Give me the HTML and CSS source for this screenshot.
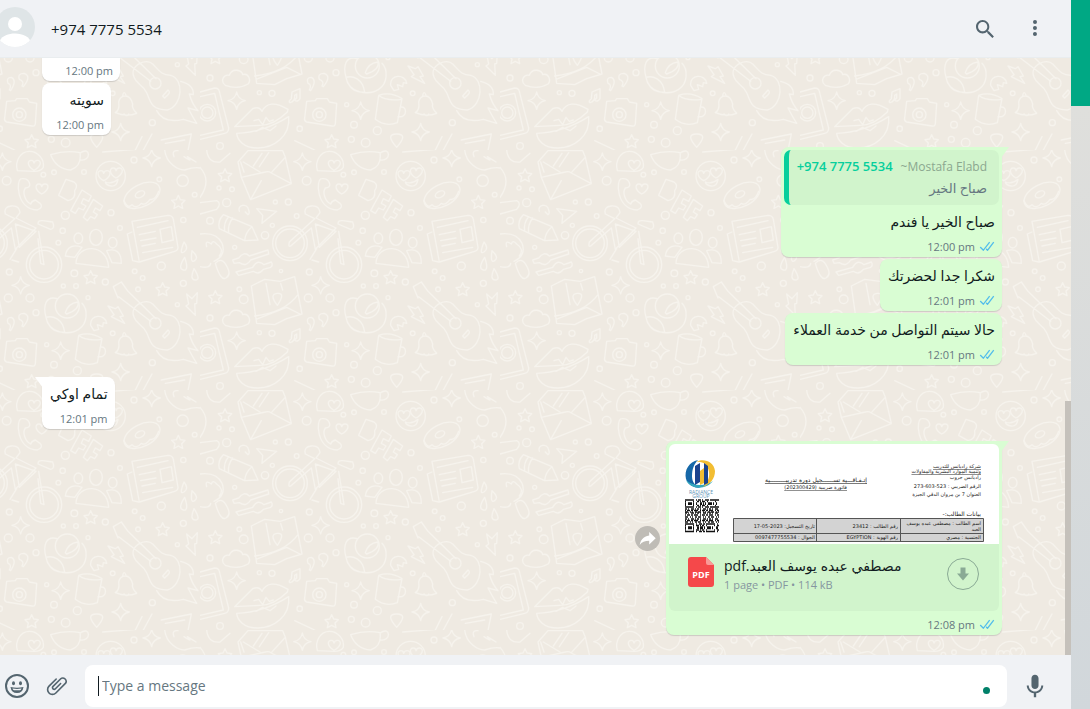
FILE: index.html
```html
<!DOCTYPE html>
<html lang="en">
<head>
    <meta charset="UTF-8">
    <meta name="viewport" content="width=device-width, initial-scale=1.0">
    <title>Chat</title>
    <link rel="stylesheet" href="styles.css">
</head>
<body>
    <svg class="defs" width="0" height="0" aria-hidden="true">
        <symbol id="ticks" viewBox="0 0 16 15">
            <path fill="currentColor" d="M15.01 3.316l-.478-.372a.365.365 0 0 0-.51.063L8.666 9.879a.32.32 0 0 1-.484.033l-.358-.325a.319.319 0 0 0-.484.032l-.378.483a.418.418 0 0 0 .036.541l1.32 1.266c.143.14.361.125.484-.033l6.272-8.048a.366.366 0 0 0-.064-.512zm-4.1 0l-.478-.372a.365.365 0 0 0-.51.063L4.566 9.879a.32.32 0 0 1-.484.033L1.891 7.769a.366.366 0 0 0-.515.006l-.423.433a.364.364 0 0 0 .006.514l3.258 3.185c.143.14.361.125.484-.033l6.272-8.048a.365.365 0 0 0-.063-.51z"/>
        </symbol>
    </svg>

    <div class="app">
        <main class="chat">
            <header class="chat-header">
                <svg class="avatar" viewBox="0 0 40 40">
                    <clipPath id="round"><circle cx="20" cy="20" r="20"/></clipPath>
                    <g clip-path="url(#round)">
                        <rect width="40" height="40" fill="#dfe5e7"/>
                        <circle cx="20" cy="17" r="7" fill="#fff"/>
                        <path fill="#fff" d="M4 40v-4c1-6 8-9.500 16-9.500s15 3.500 16 9.500v4z"/>
                    </g>
                </svg>
                <h1 class="contact">+974 7775 5534</h1>
                <button class="icon-btn" aria-label="Search">
                    <svg viewBox="0 0 24 24"><path fill="currentColor" d="M15.9 14.3H15l-.3-.3c1-1.100 1.600-2.700 1.600-4.300 0-3.700-3-6.700-6.700-6.700S3 6 3 9.700s3 6.700 6.700 6.700c1.600 0 3.200-.6 4.300-1.600l.3.3v.8l5.100 5.100 1.500-1.500-5-5.200zm-6.200 0c-2.600 0-4.600-2.100-4.600-4.600s2.100-4.600 4.600-4.600 4.600 2.100 4.600 4.600-2 4.600-4.600 4.600z"/></svg>
                </button>
                <button class="icon-btn" aria-label="Menu">
                    <svg viewBox="0 0 24 24"><path fill="currentColor" d="M12 7a2 2 0 1 0-.001-4.001A2 2 0 0 0 12 7zm0 2a2 2 0 1 0-.001 3.999A2 2 0 0 0 12 9zm0 6a2 2 0 1 0-.001 3.999A2 2 0 0 0 12 15z"/></svg>
                </button>
            </header>

            <section class="conversation">
                <!-- Doodle wallpaper -->
                <svg class="wallpaper" width="100%" height="100%" aria-hidden="true">
                    <defs>
                        <g id="star"><path d="M0-20l6 13 14 2-10 10 3 14-13-7-13 7 3-14-10-10 14-2z"/></g>
                        <g id="spark"><path d="M0-26q4 22 26 26q-22 4-26 26q-4-22-26-26q22-4 26-26z"/></g>
                        <g id="heart"><path d="M0 16c-22-13-20-30-8-30q7 0 8 8q3-9 11-8c14 2 9 20-11 30z"/></g>
                        <pattern id="doodles" width="300" height="240" x="200" y="92" patternUnits="userSpaceOnUse" viewBox="0 0 900 720">
                            <g fill="none" stroke="#f6f3ed" stroke-width="4" stroke-linejoin="round" stroke-linecap="round">
                                <!-- letter -->
                                <path d="M124 82l72-16q10-3 18 3l60 32-122 48zM124 82l-10-46 30-34h104l8 20 18 78M132 66l-10-30M152 148l32-56M180 66l-50-30M214 68l40-44M160 48l26-38M178 50l28-42"/>
                                <!-- phone and heart -->
                                <path d="M366 86c-20 0-18 92 46 94q20-8 8-20l-14-10q-12 4-14 12c-16-8-26-34-16-48q18-2 12-16t-22-12z"/>
                                <use href="#heart" x="425" y="116"/>
                                <path d="M352 62c-8-30 10-58 36-58s46 24 42 48q-10 14-30 12z"/>
                                <use href="#heart" x="402" y="45"/>
                                <path d="M452 14q46-14 88-6q6 40-28 52q-44-4-60-46zM542 8c30-20 32 26 0 22"/>
                                <!-- smiley -->
                                <circle cx="632" cy="78" r="44"/>
                                <path d="M616 96q20 8 38-8q-4 22-20 20t-18-12z"/>
                                <use href="#heart" x="611" y="76"/><use href="#heart" x="648" y="68"/>
                                <!-- block letters -->
                                <path d="M498 88l24 8q14 10 2 26q4 26-20 30l-28-16zM546 120l28 18-8 16-16-8-6 14 14 8-8 12-14-6-10 16-14-8zM580 148l28 20-8 14-14-8-6 12 12 8-8 12-12-6-10 12-12-10z"/>
                                <!-- doughnut -->
                                <ellipse cx="726" cy="136" rx="58" ry="33" transform="rotate(-27 726 136)"/>
                                <ellipse cx="720" cy="133" rx="15" ry="9" transform="rotate(-27 720 133)"/>
                                <path d="M672 152q12 26 24 12q14 14 28-4q12 8 26-12q16 4 26-24"/>
                                <!-- crayon -->
                                <path d="M70 194q-18 18-12 42l76 36 40-2-18-40zM86 200q-16 20-12 42M98 204q-16 22-12 44M134 272q2-26 22-42"/>
                                <path d="M170 176l60 8-44 36 2-24zM118 184c-8-20 24-26 28-4q4 10-2 14l-8-8"/>
                                <!-- bike -->
                                <circle cx="270" cy="280" r="52"/><circle cx="270" cy="280" r="43"/>
                                <circle cx="432" cy="344" r="53"/><circle cx="432" cy="344" r="43"/>
                                <path d="M268 276l76-70-28-14q-6-22 18-24t26 20l-12 16 60 30-62 64-12-64-62 54q-8 4-4-12M346 222l12 70 50-48zM416 244l16 100-10-4-8-74M414 222q0-12 14-10l30 4q8 20-6 22zM330 328l20-32M336 330l20 6"/>
                                <!-- people -->
                                <path d="M528 340c2-60 94-62 98 12zM496 318c4-30 28-36 50-26l-22 30zM664 340c0-34-16-46-44-38l16 36z"/>
                                <ellipse cx="588" cy="262" rx="19" ry="24"/><ellipse cx="535" cy="265" rx="13" ry="16"/><ellipse cx="638" cy="278" rx="13" ry="16"/>
                                <!-- newspaper -->
                                <path d="M696 214l108-18q14 0 16 12l14 84q0 10-10 12l-106 32zM696 246l-14 6 16 80 18 4M712 232l92-20M718 254l48-10M722 272l46-8M726 288l40-8M728 308l90-16M780 238l34-8 6 40-34 8z"/>
                                <!-- sliders -->
                                <path d="M98 330l18-6q16-22 32-6l56-18 2 12-54 18q-12 22-34 8l-16 2zM108 366l50-14q14-26 34-8l22-8q6 10-2 16l-22 6q-14 18-30 6l-44 12z"/>
                                <path d="M0 252q50-6 66 28q14 36-24 54M20 290q-6-22 14-8q4-14 16 0q24 16 8 36M46 340q20-22 36 12q12 22-4 32t-32-44zM0 350q30 6 32-10"/>
                                <!-- map -->
                                <path d="M154 408l40-20 46 6 44-14 22 112-46 14-36 18-54-4zM164 498q90-10 130-64M168 508l92-36 40 20M198 400l12 64M242 400l6 20"/>
                                <path d="M232 466q-26-34 0-36t0 36z"/>
                                <!-- bird -->
                                <circle cx="502" cy="468" r="36"/>
                                <path d="M472 446c-34-10-44 20-34 56 8 50 70 54 98 36s28-60 10-78M438 502c20-6 50 4 56 44q-44 4-56-44zM496 488q8-28 38-32q6 22-34 36z"/>
                                <!-- guitar -->
                                <path d="M640 410l24-14 20 28 84 82M656 440l96 74M640 410l14 34M702 502c-16-34 36-60 56-40s24 32 54 34c40 10 38 90-10 104-50 0-50-26-62-52s-30-24-38-46zM788 558l16-18q8 6 0 14l-10 10zM842 514q40 10 38 40l-12-2q8 30 26 50l-30-8q10 20 26 46l-40-12q-60 14-80-26"/>
                                <circle cx="766" cy="520" r="17"/>
                                <!-- cloud, tablet, lips -->
                                <path d="M76 526c-16-12-6-34 12-30 8-24 38-16 40-2 18-6 26 18 16 28q-30 18-68 4zM0 546l44-12q12 0 14 10l28 110q0 14-12 16l-74 18M0 560l44-10 26 110-70 16"/>
                                <circle cx="22" cy="608" r="25"/><circle cx="22" cy="608" r="17"/>
                                <path d="M104 650l54-54q20-8 28 8q20-40 78-6l-2 8q-40 40-82 40zM110 670q80-2 156-50c6 60-46 94-92 94s-62-26-64-44zM162 632l14-4 12 16 10-22 10 12 12-4M168 664l20-12 22 10 18-14"/>
                                <!-- camera, mug, bell -->
                                <path d="M320 574l26-2 4-6h32l6 10 22 4-4 62q-2 8-10 6l-76-12q-8-2-6-12z"/><circle cx="358" cy="614" r="20"/><circle cx="358" cy="614" r="9"/>
                                <path d="M536 556l-10 72q32 24 66 10l14-72q-34-22-70-10zM536 556q20 18 70 12M600 592c20-8 26 32-6 28M646 608q14-8 10-32 4-18 20-18t22 24q-4 12 12 28-30 12-64-2zM668 556q4-16 10 0M672 612q10 10 14 0"/>
                                <!-- bolts, notes, bits -->
                                <path d="M624 468l22 8 8-6 16 28-10 2 14 20-40-20 8-6zM860 432l16 14 16-18-2 32-6 2 2 34-28-28 8-6zM324 520q-6-18 10-18 18 8-2 40l-4-2q8-16-4-20zM358 508q-6-18 14-18 24 8-2 40l-4-2q8-14-8-20zM276 546l24-10v30q-8 12-16 4l6-6v-12l-6 4q2 18-14 22-6-4 4-12zM572 526c-4-34 44-36 48-6l-10-2-2 12-16-6 4 14-14 4zM590 712q-36-40 0-40t0 40zM706 720l20-40M730 720l26-48M784 690l90-18-10 50M796 700l58-10M284 692l60 28M0 158l50-6q16 8 0 26l-50 14M0 52q36 40 0 90M20 0q4 40 40 36l30-26M608 6l100-8"/>
                                <path d="M794 0c4 40 40 60 60 60q30-10 46-6M822 20q-8-20 12-18M852 20q30 20 10 0l26 16M852 276q16 20 0 30t0-30zM876 302q22 20 8 30t-8-30zM854 322q-22 34-4 38t4-38zM882 356q-14 34 4 34t-4-34z"/>
                                <circle cx="848" cy="92" r="17"/>
                                <use href="#star" x="75" y="76"/><use href="#star" x="46" y="442"/><use href="#star" x="572" y="382"/><use href="#star" x="835" y="156"/><use href="#star" x="395" y="694"/><use href="#star" x="788" y="418"/>
                                <use href="#spark" x="307" y="35"/><use href="#spark" x="755" y="24"/><use href="#spark" x="362" y="406"/><use href="#spark" x="110" y="572"/><use href="#spark" x="482" y="602"/><use href="#spark" x="662" y="666"/>
                                <circle cx="320" cy="92" r="13"/><circle cx="265" cy="156" r="9"/><circle cx="80" cy="158" r="12"/><circle cx="30" cy="212" r="10"/><circle cx="195" cy="256" r="11"/><circle cx="496" cy="196" r="12"/><circle cx="633" cy="188" r="9"/><circle cx="488" cy="242" r="8"/><circle cx="475" cy="278" r="7"/><circle cx="523" cy="370" r="10"/><circle cx="328" cy="366" r="9"/><circle cx="390" cy="444" r="12"/><circle cx="325" cy="444" r="12"/><circle cx="408" cy="488" r="9"/><circle cx="131" cy="448" r="13"/><circle cx="30" cy="504" r="9"/><circle cx="216" cy="550" r="9"/><circle cx="784" cy="348" r="12"/><circle cx="850" cy="400" r="9"/><circle cx="616" cy="396" r="9"/><circle cx="702" cy="30" r="9"/><circle cx="462" cy="644" r="10"/><circle cx="532" cy="662" r="12"/><circle cx="497" cy="698" r="13"/><circle cx="454" cy="688" r="9"/><circle cx="757" cy="638" r="9"/><circle cx="60" cy="708" r="10"/><circle cx="299" cy="656" r="8"/>
                                <circle cx="96" cy="118" r="7"/><circle cx="57" cy="114" r="6"/><circle cx="430" cy="74" r="7"/><circle cx="462" cy="67" r="7"/><circle cx="552" cy="66" r="7"/><circle cx="226" cy="156" r="6"/><circle cx="290" cy="198" r="7"/><circle cx="217" cy="226" r="6"/><circle cx="104" cy="292" r="6"/><circle cx="243" cy="363" r="5"/><circle cx="704" cy="364" r="7"/><circle cx="728" cy="384" r="7"/><circle cx="564" cy="443" r="6"/><circle cx="832" cy="464" r="6"/><circle cx="178" cy="548" r="6"/><circle cx="440" cy="584" r="6"/><circle cx="638" cy="550" r="7"/><circle cx="118" cy="418" r="7"/><circle cx="850" cy="210" r="8"/><circle cx="660" cy="234" r="7"/><circle cx="778" cy="88" r="7"/><circle cx="884" cy="134" r="7"/><circle cx="490" cy="408" r="6"/><circle cx="528" cy="408" r="7"/><circle cx="714" cy="418" r="7"/>
                            </g>
                        </pattern>
                    </defs>
                    <rect width="100%" height="100%" fill="url(#doodles)"/>
                </svg>

                <div class="messages">
                    <div class="bubble in cut">
                        <div class="meta">12:00 pm</div>
                    </div>
                    <div class="bubble in">
                        <p class="text" dir="rtl" lang="ar">سويته</p>
                        <div class="meta">12:00 pm</div>
                    </div>

                    <div class="bubble out first">
                        <div class="quote">
                            <div class="quote-head">
                                <span class="quote-number">+974 7775 5534</span>
                                <span class="quote-name">~Mostafa Elabd</span>
                            </div>
                            <p class="quote-text" dir="rtl" lang="ar">صباح الخير</p>
                        </div>
                        <p class="text" dir="rtl" lang="ar">صباح الخير يا فندم</p>
                        <div class="meta">12:00 pm <svg class="ticks"><use href="#ticks"/></svg></div>
                    </div>
                    <div class="bubble out">
                        <p class="text" dir="rtl" lang="ar">شكرا جدا لحضرتك</p>
                        <div class="meta">12:01 pm <svg class="ticks"><use href="#ticks"/></svg></div>
                    </div>
                    <div class="bubble out">
                        <p class="text" dir="rtl" lang="ar">حالا سيتم التواصل من خدمة العملاء</p>
                        <div class="meta">12:01 pm <svg class="ticks"><use href="#ticks"/></svg></div>
                    </div>

                    <div class="bubble in first">
                        <p class="text" dir="rtl" lang="ar">تمام اوكي</p>
                        <div class="meta">12:01 pm</div>
                    </div>

                    <div class="file-row">
                        <button class="forward" aria-label="Forward">
                            <svg viewBox="0 0 25 25"><path fill="#fff" d="M14.200 9.500V6l6.500 6.200-6.500 6.200v-3.600c-4.300 0-7.400 1.300-9.500 4.300.8-4.400 3.300-8.700 9.500-9.600z"/></svg>
                        </button>
                        <div class="bubble out first file">
                            <svg class="preview" viewBox="0 0 330 100">
                                <rect width="330" height="100" fill="#fff"/>
                                <!-- company logo -->
                                <path fill="#1668a8" d="M29 16c-9 2-14 10-12 19 2 6 8 9 15 9-6-2-9-6-9-12 0-7 2-12 6-16z"/>
                                <path fill="#34a7bd" d="M17 36c4 9 19 11 27 1-7 5-20 6-27-1z"/>
                                <path fill="#f2bd32" d="M27 18c7-4 18-1 19 9 0 8-5 13-12 16 4-4 7-9 6-15-1-7-6-11-13-10z"/>
                                <path fill="#1b438e" d="M26 22l5-3v19l-5 3zM35 19l4 3v17l-4 2z"/>
                                <path fill="#f2bd32" d="M31 27l4-3v15l-4 2z"/>
                                <g class="doc-brand" text-anchor="middle">
                                    <text x="32" y="50">RADIANCE</text>
                                    <text x="32" y="54">GROUP</text>
                                </g>
                                <!-- QR code -->
                                <g stroke="#111" stroke-width="1.300">
                                    <path stroke-dasharray="9 2 1 1 3 1 1 2 4 1" d="M16 56h34M16 63h34"/>
                                    <path stroke-dasharray="1 7 1 3 2 1 1 1 3 2" d="M16 57.500h34M16 61.500h34"/>
                                    <path stroke-dasharray="1 2 4 1 1 2 1 3 2 1 1 1" d="M16 59h34M16 60.300h34"/>
                                    <path stroke-dasharray="2 1 1 2 3 1 1 1" d="M16 65h34M16 69h34M16 75h34"/>
                                    <path stroke-dasharray="1 1 3 1 2 1 4 2" d="M16 66.500h34M16 71h34M16 76.500h34"/>
                                    <path stroke-dasharray="3 2 1 1 1 2 2 1" d="M16 68h34M16 73h34M16 78h34"/>
                                    <path stroke-dasharray="9 2 1 2 3 1 2 1" d="M16 80h34M16 87.500h34"/>
                                    <path stroke-dasharray="1 7 1 2 3 1 1 1 2 2" d="M16 81.500h34M16 86h34"/>
                                    <path stroke-dasharray="1 2 4 1 1 3 2 1 3 1" d="M16 83h34M16 84.500h34"/>
                                </g>
                                <!-- shaded table -->
                                <path fill="#d3d3d3" stroke="#555" stroke-width="1" d="M64.500 74.500h250v23h-250zM64.500 89.500h250M147.500 74.500v23M231.500 74.500v23"/>
                                <g class="doc-text" direction="rtl" lang="ar">
                                    <text class="line" x="312" y="24">شركة راديانس للتدريب</text>
                                    <text class="line" x="312" y="29">وتنمية الموارد البشرية والمقاولات</text>
                                    <text x="312" y="35">راديانس جروب</text>
                                    <text x="312" y="44">الرقم الضريبي : 523-603-273</text>
                                    <text x="312" y="52">العنوان 7 بن مروان الدقي الجيزة</text>
                                    <text class="doc-heading" x="312" y="72">بيانات الطالب:-</text>
                                    <text class="line doc-heading" x="198" y="38">إتـفـاقـــية تســــــجيل دورة تدريبـــــــــية</text>
                                    <text class="line" x="178" y="45">فاتورة ضريبية (202300429)</text>
                                    <text x="312" y="81">اسم الطالب : مصطفى عبده يوسف</text>
                                    <text x="312" y="87">العبد</text>
                                    <text x="229" y="84">رقم الطالب : 23412</text>
                                    <text x="146" y="84">تاريخ التسجيل: 2023-05-17</text>
                                    <text x="312" y="95">الجنسية : مصري</text>
                                    <text x="229" y="95">رقم الهوية : EGYPTION</text>
                                    <text x="146" y="95">الجوال : 0097477755534</text>
                                </g>
                            </svg>
                            <div class="file-info">
                                <svg class="pdf-icon" viewBox="0 0 26 30">
                                    <path fill="#f5484a" d="M3 0h15l8 8v19a3 3 0 0 1-3 3H3a3 3 0 0 1-3-3V3a3 3 0 0 1 3-3z"/>
                                    <path fill="#f99a98" d="M18 0l8 8h-6a2 2 0 0 1-2-2z"/>
                                    <text x="13" y="21" text-anchor="middle">PDF</text>
                                </svg>
                                <div class="file-label">
                                    <div class="file-name"><bdi>pdf.</bdi><bdi lang="ar">مصطفي عبده يوسف العبد</bdi></div>
                                    <div class="file-size">1 page • PDF • 114 kB</div>
                                </div>
                                <button class="download" aria-label="Download">
                                    <svg viewBox="0 0 34 34"><circle cx="17" cy="17" r="15.500" fill="none" stroke="currentColor"/><path fill="currentColor" d="M14.500 10.500h5v6h3.500l-6 7-6-7h3.500z"/></svg>
                                </button>
                            </div>
                            <div class="meta">12:08 pm <svg class="ticks"><use href="#ticks"/></svg></div>
                        </div>
                    </div>
                </div>
                <div class="scroll-thumb"></div>
            </section>

            <footer class="composer">
                <button class="icon-btn" aria-label="Emoji">
                    <svg viewBox="0 0 24 24"><circle cx="12" cy="12" r="11" fill="none" stroke="currentColor" stroke-width="2"/><ellipse cx="8.500" cy="9.300" rx="1.500" ry="2" fill="currentColor"/><ellipse cx="15.500" cy="9.300" rx="1.500" ry="2" fill="currentColor"/><path fill="currentColor" d="M5.500 13q6.500 1.600 13 0-.8 6-6.500 6t-6.500-6z"/><path fill="#f0f2f5" d="M7.500 14.600q4.500.9 9 0-.6 1.500-1.500 1.700H9q-1-.3-1.500-1.700z"/></svg>
                </button>
                <button class="icon-btn" aria-label="Attach">
                    <svg viewBox="0 0 24 24"><path fill="currentColor" d="M1.816 15.556v.002c0 1.502.584 2.912 1.646 3.972s2.472 1.647 3.974 1.647a5.580 5.580 0 0 0 3.972-1.645l9.547-9.548c.769-.768 1.147-1.767 1.058-2.817-.079-.968-.548-1.927-1.319-2.698-1.594-1.592-4.068-1.711-5.517-.262l-7.916 7.915c-.881.881-.792 2.250.214 3.261.959.958 2.423 1.053 3.263.215l5.511-5.512c.28-.28.267-.722.053-.936l-.244-.244c-.191-.191-.567-.349-.957.04l-5.506 5.506c-.18.18-.635.127-.976-.214-.098-.097-.576-.613-.213-.973l7.915-7.917c.818-.817 2.267-.699 3.230.262.5.501.802 1.100.849 1.685.051.573-.156 1.111-.589 1.543l-9.547 9.549a3.970 3.970 0 0 1-2.829 1.171 3.975 3.975 0 0 1-2.830-1.173 3.973 3.973 0 0 1-1.172-2.828c0-1.071.415-2.076 1.172-2.830l7.209-7.211c.157-.157.264-.579.028-.814L11.500 4.360a.572.572 0 0 0-.834.018l-7.205 7.207a5.577 5.577 0 0 0-1.645 3.971z"/></svg>
                </button>
                <div class="field">
                    <input type="text" placeholder="Type a message" aria-label="Type a message">
                    <span class="dot"></span>
                </div>
                <button class="icon-btn" aria-label="Voice message">
                    <svg viewBox="0 0 24 24"><path fill="currentColor" d="M11.999 14.942c2.001 0 3.531-1.530 3.531-3.531V4.350c0-2.001-1.530-3.531-3.531-3.531S8.469 2.350 8.469 4.350v7.061c0 2.001 1.530 3.531 3.530 3.531zm6.238-3.530c0 3.531-2.942 6.002-6.237 6.002s-6.237-2.471-6.237-6.002H3.761c0 4.001 3.178 7.297 7.061 7.885v3.884h2.354v-3.884c3.884-.588 7.061-3.884 7.061-7.885h-2z"/></svg>
                </button>
            </footer>
        </main>
        <div class="backdrop"></div>
    </div>
</body>
</html>
```
FILE: styles.css
```css
* {
    box-sizing: border-box;
}

body {
    margin: 0;
    font-family: "Open Sans", "DejaVu Sans", sans-serif;
    color: #111b21;
}

p, h1 {
    margin: 0;
}

button {
    border: none;
    padding: 0;
    background: none;
    cursor: pointer;
}

svg {
    display: block;
}

.defs {
    position: absolute;
}

.app {
    display: flex;
    height: 100vh;
    overflow: hidden;
}

.chat {
    flex: 1;
    min-width: 0;
    display: flex;
    flex-direction: column;
    overflow: hidden;
}

.backdrop {
    width: 19px;
    background: linear-gradient(#00a884 106px, #dfdfdc 106px, #d1d7db);
}

/* Header */
.chat-header {
    display: flex;
    align-items: center;
    height: 58px;
    padding: 0 24px 0 0;
    background-color: #f0f2f5;
    border-bottom: 1px solid #e9edef;
}

.avatar {
    width: 40px;
    height: 40px;
    margin: 0 16px 4px -5px;
}

.contact {
    flex: 1;
    font-size: 15px;
    font-weight: 400;
    line-height: 22px;
}

.icon-btn {
    width: 24px;
    height: 24px;
    color: #54656f;
}

.chat-header .icon-btn + .icon-btn {
    margin-left: 26px;
}

/* Messages */
.conversation {
    flex: 1;
    min-height: 0;
    position: relative;
    overflow: hidden;
    background-color: #efeae2;
}

.wallpaper {
    position: absolute;
    inset: 0;
}

.messages {
    position: relative;
    height: 100%;
    display: flex;
    flex-direction: column;
    justify-content: flex-end;
    align-items: flex-start;
    gap: 2px;
    padding: 0 69px 20px 42px;
}

.bubble {
    position: relative;
    min-width: 69px;
    padding: 6px 7px 3px 8px;
    border-radius: 8px;
    background-color: #fff;
    box-shadow: 0 1px 1px rgba(11, 20, 26, 0.15);
}

.bubble.out {
    align-self: flex-end;
    background-color: #d9fdd3;
}

.bubble.first,
.file-row {
    margin-top: 10px;
}

.bubble.in.first {
    border-top-left-radius: 0;
}

.bubble.out.first {
    border-top-right-radius: 0;
    padding: 3px;
}

.bubble.first::before {
    content: "";
    position: absolute;
    top: 0;
    left: -7px;
    width: 8px;
    height: 11px;
    background-color: inherit;
    clip-path: polygon(0 0, 100% 0, 100% 100%);
}

.bubble.out.first::before {
    left: auto;
    right: -7px;
    clip-path: polygon(0 0, 100% 0, 0 100%);
}

.bubble.cut {
    min-width: 78px;
}

.text {
    font-size: 14px;
    line-height: 22px;
}

.out.first .text {
    padding: 6px 4px 0;
}

.meta {
    display: flex;
    justify-content: flex-end;
    align-items: center;
    gap: 4px;
    margin-top: 6px;
    font-size: 11px;
    line-height: 15px;
    color: #667781;
}

.out.first .meta {
    padding-right: 4px;
}

.ticks {
    width: 16px;
    height: 15px;
    color: #53bdeb;
}

.quote {
    padding: 5px 12px 6px 8px;
    border-left: 5px solid #06cf9c;
    border-radius: 7px;
    background-color: #d1f4cc;
}

.quote-head {
    display: flex;
    align-items: baseline;
    gap: 8px;
    font-size: 12px;
    line-height: 22px;
}

.quote-number {
    font-size: 13px;
    font-weight: 600;
    color: #06cf9c;
}

.quote-name {
    color: #8ba78f;
}

.quote-text {
    font-size: 13px;
    line-height: 21px;
    color: #667781;
}

/* File message */
.file-row {
    align-self: flex-end;
    display: flex;
    align-items: center;
    gap: 6px;
}

.forward {
    width: 25px;
    height: 25px;
    border-radius: 50%;
    background-color: #bfbcb6;
}

.bubble.file {
    width: 336px;
    margin-top: 0;
}

.preview {
    width: 100%;
    border-radius: 6px 6px 0 0;
}

.doc-brand {
    font-size: 5px;
    fill: #5d93b5;
}

.doc-text {
    font-family: "DejaVu Sans", sans-serif;
    font-size: 5px;
    fill: #222;
}

.doc-heading {
    font-size: 6px;
}

.line {
    text-decoration: underline;
}

.file-info {
    display: flex;
    align-items: flex-start;
    height: 67px;
    padding: 13px 19px;
    border-radius: 0 0 6px 6px;
    background-color: #d1f4cc;
}

.pdf-icon {
    width: 26px;
    height: 30px;
    font-size: 9px;
    font-weight: 700;
    fill: #fff;
}

.file-label {
    flex: 1;
    margin-left: 10px;
}

.file-name {
    font-size: 14px;
    line-height: 18px;
}

.file-size {
    margin-top: 2px;
    font-size: 11px;
    line-height: 16px;
    color: #8696a0;
}

.download {
    width: 34px;
    height: 34px;
    color: #8aaa95;
}

.scroll-thumb {
    position: absolute;
    right: 0;
    bottom: 0;
    width: 6px;
    height: 254px;
    background-color: #c5c1bb;
}

/* Composer */
.composer {
    display: flex;
    align-items: center;
    gap: 16px;
    padding: 10px 24px 2px 5px;
    background-color: #f0f2f5;
}

.field {
    flex: 1;
    display: flex;
    align-items: center;
    height: 42px;
    padding: 0 17px 0 13px;
    border-radius: 8px;
    background-color: #fff;
}

.field::before {
    content: "";
    width: 1px;
    height: 20px;
    background-color: #111b21;
}

.field input {
    flex: 1;
    min-width: 0;
    border: none;
    outline: none;
    padding: 0 3px;
    background: none;
    font-family: inherit;
    font-size: 14px;
    line-height: 20px;
}

.field input::placeholder {
    color: #667781;
}

.dot {
    width: 7px;
    height: 7px;
    margin-top: 8px;
    border-radius: 50%;
    background-color: #008069;
}
```
